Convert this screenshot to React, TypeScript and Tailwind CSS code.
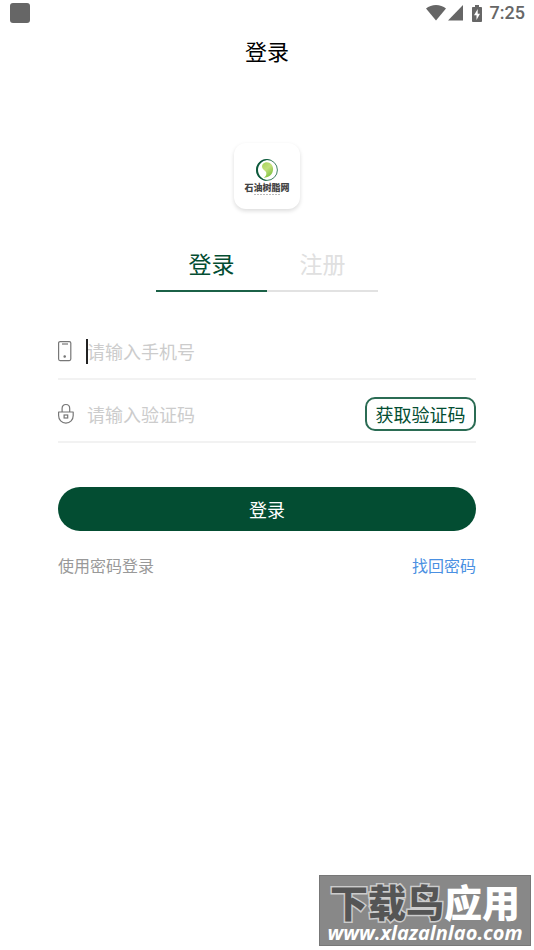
import { useState } from "react";

const TABS = ["登录", "注册"];

function StatusBar() {
  return (
    <div className="flex h-[26px] items-center justify-between pr-[9px] pl-[10px] text-[#666]">
      <span className="h-5 w-5 rounded-[3px] bg-[#666]" />
      <div className="flex items-center">
        <svg width="20" height="16" viewBox="0 0 20 16" fill="currentColor">
          <path d="M0 3.600C2.800 1.300 6.200 0 10 0s7.200 1.300 10 3.600L10 15.600z" />
        </svg>
        <svg className="ml-[2px]" width="15" height="16" viewBox="0 0 15 16" fill="currentColor">
          <path d="M15 0v15.500H0z" />
        </svg>
        <svg className="ml-[9px]" width="10" height="17" viewBox="0 0 10 17">
          <path d="M3 0h4v2h2.200c.5 0 .8.300.8.800v13.200c0 .600-.3 1-.8 1H.800c-.5 0-.8-.4-.8-1V2.800C0 2.300.300 2 .800 2H3z" fill="currentColor" />
          <path d="M5.700 4L2 10.300h2.500V15L8 8.700H5.700z" fill="#fff" />
        </svg>
        <span className="ml-2 font-[Roboto] text-lg leading-[26px] font-medium">7:25</span>
      </div>
    </div>
  );
}

function Logo() {
  return (
    <div className="flex h-[66px] w-[66px] flex-col items-center rounded-xl bg-white pt-[15px] shadow-[0_2px_4px_rgba(0,0,0,0.14)]">
      <svg width="24" height="24" viewBox="0 0 24 24" fill="none">
        <defs>
          <linearGradient id="leaf" x1="0" y1="0" x2="0.6" y2="1">
            <stop offset="0" stopColor="#a5d25a" />
            <stop offset="0.5" stopColor="#c3e07c" />
            <stop offset="1" stopColor="#7fc241" />
          </linearGradient>
        </defs>
        <circle cx="12" cy="12" r="10.400" stroke="#3f8263" strokeWidth="1" />
        <path d="M16.500 2C8.500-1.200 1 4.500 1 12c0 6.200 4.800 10.900 11.500 11C7 21 3 17.300 3 11.800 3 5.800 9.500.300 16.500 2z" fill="#0d5a3c" />
        <path d="M11.800 4.200c-3 0-5 2.200-4.700 4.700.4 2.800 3.500 3.500 4.100 5.600.6 2.100-.4 3.900-2.700 5.300 5.600.1 9.600-3.700 9.600-8.700 0-4-2.600-6.900-6.300-6.900z" fill="url(#leaf)" />
      </svg>
      <span className="text-[9px] leading-3 font-black text-[#444]">石油树脂网</span>
      <svg width="26" height="2" viewBox="0 0 26 2">
        <path d="M0 .5h26" stroke="#bbb" strokeDasharray="2 1" />
      </svg>
    </div>
  );
}

function PhoneIcon() {
  return (
    <svg width="17" height="22" viewBox="0 0 17 22" fill="none" stroke="#777" strokeWidth="1.2">
      <rect x="0.600" y="1.600" width="12.200" height="19" rx="1.500" />
      <path d="M4 4h6" />
      <circle cx="6.700" cy="16.500" r="0.700" fill="#777" />
    </svg>
  );
}

function LockIcon() {
  return (
    <svg width="17" height="22" viewBox="0 0 17 22" fill="none" stroke="#777" strokeWidth="1.2">
      <path d="M4.100 9V5.500C4.100 3 5.600 1.500 7.900 1.500s3.800 1.500 3.800 4V9" />
      <path d="M.600 9h14.600v3.500c0 4.300-3 7.700-7.300 7.700S.600 16.800.600 12.500z" strokeLinejoin="round" />
      <rect x="6.100" y="12" width="3.600" height="3" />
    </svg>
  );
}

function Watermark() {
  return (
    <div className="absolute right-[3px] bottom-1 flex h-[71px] w-[212px] flex-col items-center justify-between border border-[#777] bg-[#888] pt-1 pb-[2px] whitespace-nowrap">
      <div className="text-[38px] leading-[42px] font-black">
        <span className="text-[#555] [paint-order:stroke_fill] [-webkit-text-stroke:3px_#ccc]">下载鸟</span>
        <span className="text-white">应用</span>
      </div>
      <div className="font-['Open_Sans'] text-xl leading-5 font-bold text-white italic">www.xlazalnlao.com</div>
    </div>
  );
}

export default function App() {
  const [tab, setTab] = useState(0);
  const [phone, setPhone] = useState("");
  const [code, setCode] = useState("");

  return (
    <div className="relative min-h-screen bg-white font-['Noto_Sans_CJK_SC',sans-serif]">
      <StatusBar />
      <h1 className="text-center text-[22px] leading-[48px] text-black">登录</h1>

      <main className="flex flex-col px-[58px] pt-[69px]">
        <div className="flex justify-center">
          <Logo />
        </div>

        <div className="mt-7 flex justify-center" role="tablist">
          {TABS.map((label, i) => (
            <button
              key={label}
              role="tab"
              aria-selected={tab === i}
              onClick={() => setTab(i)}
              className={
                tab === i
                  ? "h-[55px] w-[111px] border-b-2 border-[#1b6147] text-[23px] text-[#034d32]"
                  : "h-[55px] w-[111px] border-b-2 border-[#e2e2e2] text-[23px] text-[#e0e0e0]"
              }
            >
              {label}
            </button>
          ))}
        </div>

        <form className="flex flex-col" onSubmit={(e) => e.preventDefault()}>
          <div className="mt-[25px] flex h-[63px] items-center border-b-2 border-[#f2f2f2] pt-[7px]">
            <label htmlFor="phone" aria-label="请输入手机号">
              <PhoneIcon />
            </label>
            <div className="relative ml-3 flex flex-1 items-center">
              {phone === "" && <span className="absolute left-[-1px] h-[25px] w-[2px] bg-[#222]" />}
              <input
                id="phone"
                type="tel"
                value={phone}
                onChange={(e) => setPhone(e.target.value)}
                placeholder="请输入手机号"
                className="w-full min-w-0 text-lg text-[#333] outline-none placeholder:text-[#ccc]"
              />
            </div>
          </div>

          <div className="flex h-[63px] items-center border-b-2 border-[#f2f2f2] pt-[7px]">
            <label htmlFor="code" aria-label="请输入验证码">
              <LockIcon />
            </label>
            <input
              id="code"
              value={code}
              onChange={(e) => setCode(e.target.value)}
              placeholder="请输入验证码"
              className="ml-3 min-w-0 flex-1 text-lg text-[#333] outline-none placeholder:text-[#ccc]"
            />
            <button type="button" className="h-[34px] w-[111px] rounded-[10px] border-2 border-[#2b6c54] text-lg leading-7 text-[#034d32]">
              获取验证码
            </button>
          </div>

          <button type="submit" className="mt-11 h-11 rounded-full bg-[#034d32] text-lg text-white">
            登录
          </button>
        </form>

        <div className="mt-[22px] flex justify-between text-base">
          <a href="#password" className="text-[#999]">使用密码登录</a>
          <a href="#reset" className="text-[#4a90e2]">找回密码</a>
        </div>
      </main>

      <Watermark />
    </div>
  );
}
